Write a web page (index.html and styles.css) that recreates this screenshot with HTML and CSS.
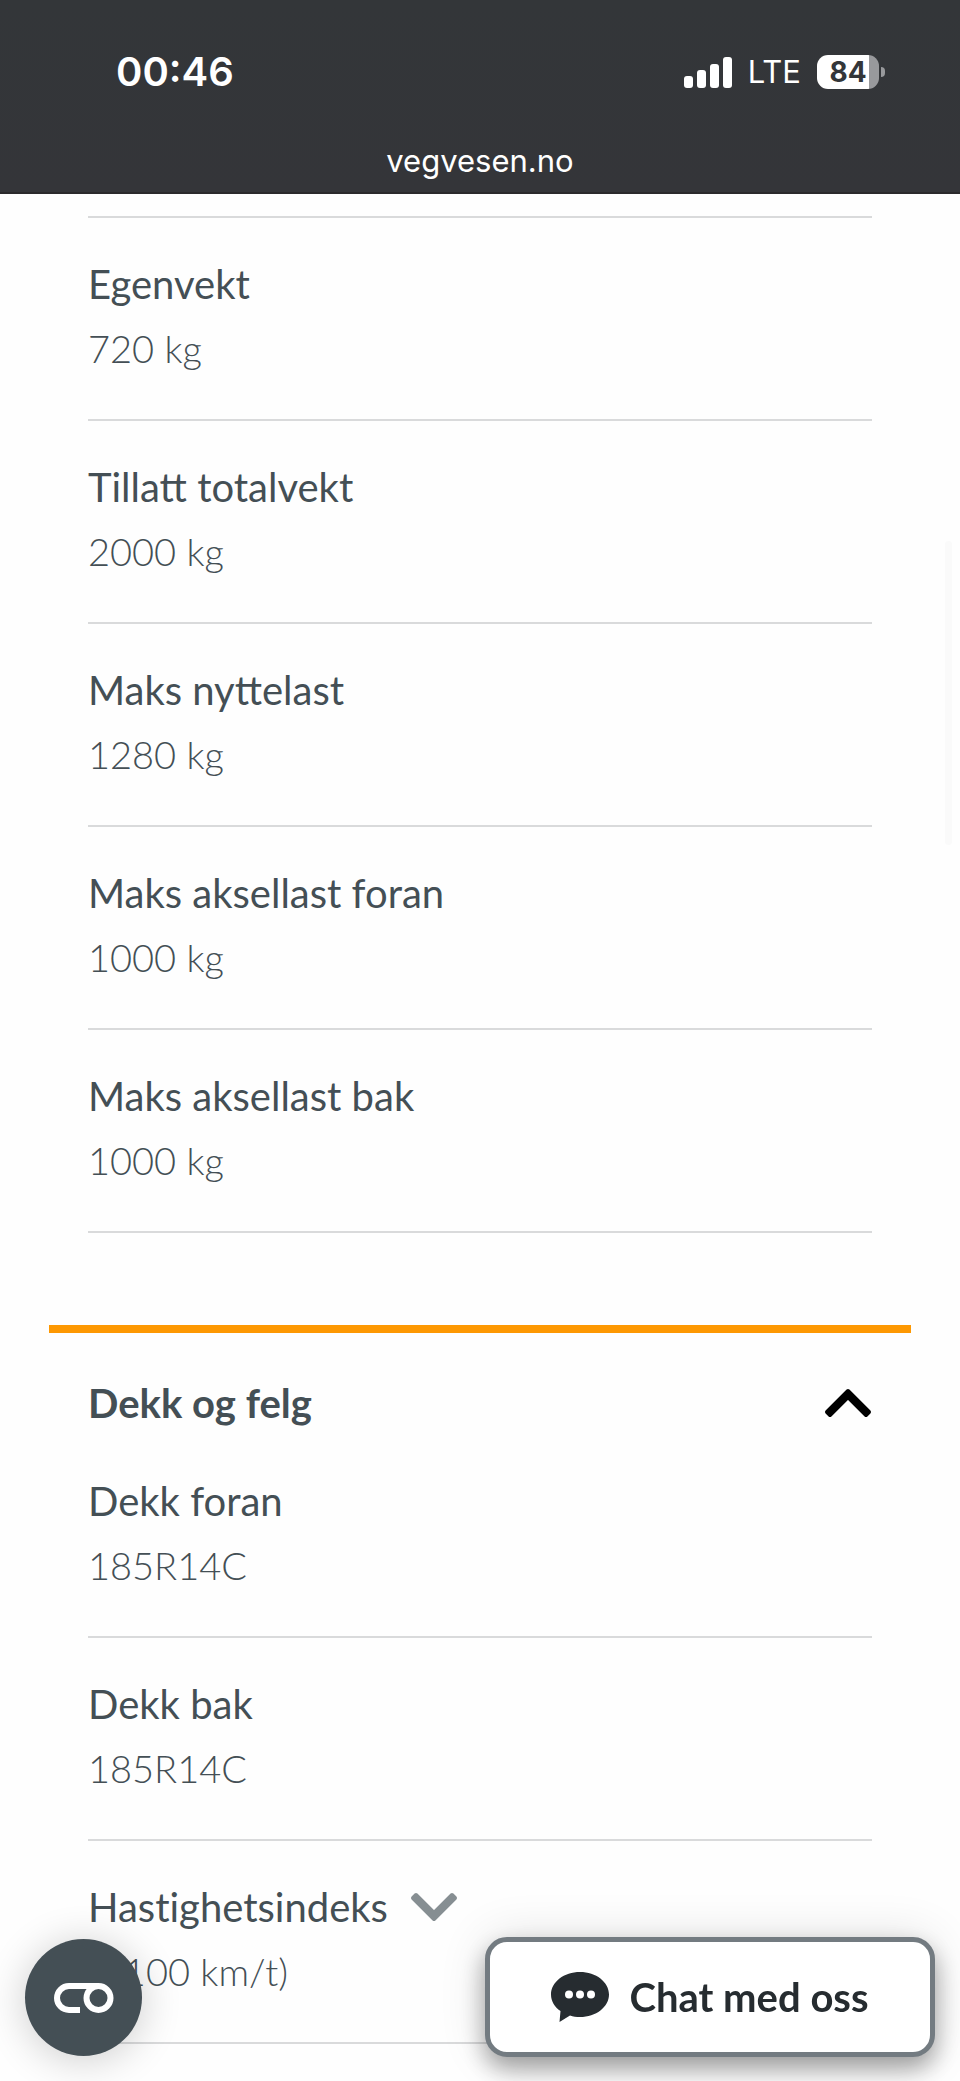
FILE: index.html
```html
<!DOCTYPE html>
<html lang="no">
<head>
    <meta charset="UTF-8">
    <meta name="viewport" content="width=device-width, initial-scale=1">
    <title>vegvesen.no</title>
    <link rel="stylesheet" href="styles.css">
</head>
<body>
    <header class="topbar">
        <div class="status">
            <span class="clock">00:46</span>
            <div class="status-right">
                <svg class="signal" viewBox="0 0 48 31" aria-hidden="true">
                    <rect x="0" y="19" width="9" height="12" rx="3"/>
                    <rect x="13" y="13" width="9" height="18" rx="3"/>
                    <rect x="26" y="7" width="9" height="24" rx="3"/>
                    <rect x="39" y="0" width="9" height="31" rx="3"/>
                </svg>
                <span class="network">LTE</span>
                <div class="battery"><span class="battery-level">84</span></div>
            </div>
        </div>
        <div class="address">vegvesen.no</div>
    </header>

    <main class="content">
        <dl class="list list-first">
            <div class="item"><dt>Egenvekt</dt><dd>720 kg</dd></div>
            <div class="item"><dt>Tillatt totalvekt</dt><dd>2000 kg</dd></div>
            <div class="item"><dt>Maks nyttelast</dt><dd>1280 kg</dd></div>
            <div class="item"><dt>Maks aksellast foran</dt><dd>1000 kg</dd></div>
            <div class="item"><dt>Maks aksellast bak</dt><dd>1000 kg</dd></div>
        </dl>

        <section class="panel">
            <h2 class="panel-heading">
                <button class="panel-toggle" type="button" aria-expanded="true">
                    Dekk og felg
                    <svg class="chevron" viewBox="0 0 48 30" aria-hidden="true">
                        <path d="M24 3L45 24L42 27L24 9L6 27L3 24Z"/>
                    </svg>
                </button>
            </h2>
            <dl class="list">
                <div class="item"><dt>Dekk foran</dt><dd>185R14C</dd></div>
                <div class="item"><dt>Dekk bak</dt><dd>185R14C</dd></div>
                <div class="item">
                    <dt>
                        <button class="help-toggle" type="button" aria-expanded="false">
                            Hastighetsindeks
                            <svg class="chevron" viewBox="0 0 48 30" aria-hidden="true">
                                <path d="M24 27L45 6L42 3L24 21L6 3L3 6Z"/>
                            </svg>
                        </button>
                    </dt>
                    <dd>J (100 km/t)</dd>
                </div>
            </dl>
        </section>
    </main>

    <div class="scroll-thumb"></div>

    <button class="cookie-button" type="button" aria-label="Informasjonskapsler">
        <svg class="cookie-icon" viewBox="0 0 60 30" aria-hidden="true">
            <path d="M26 27H15A12 12 0 0 1 15 3H45"/>
            <circle cx="44.500" cy="15" r="12"/>
        </svg>
    </button>

    <button class="chat-button" type="button">
        <svg class="chat-icon" viewBox="0 0 58 50" aria-hidden="true">
            <path d="M29 0C45 0 58 10 58 22.500S45 45 29 45C25.500 45 22 44.500 19 43.500L8.500 50L9.500 39C3.500 35 0 29 0 22.500C0 10 13 0 29 0Z"/>
            <circle cx="18" cy="22.500" r="4"/>
            <circle cx="29" cy="22.500" r="4"/>
            <circle cx="40" cy="22.500" r="4"/>
        </svg>
        Chat med oss
    </button>
</body>
</html>
```
FILE: styles.css
```css
body {
    margin: 0;
    background: #fefefe;
    color: #444f55;
    font-family: Lato, "Noto Sans", sans-serif;
    font-size: 40px;
    line-height: 64px;
}

button {
    margin: 0;
    padding: 0;
    border: 0;
    background: none;
    color: inherit;
    font: inherit;
    cursor: pointer;
}

/* top bar */
.topbar {
    box-sizing: border-box;
    height: 194px;
    padding: 40px 75px 0 116px;
    border-bottom: 2px solid #2b2a2c;
    background: linear-gradient(#333639, #343539);
    color: #fff;
    font-family: Inter, sans-serif;
}

.status {
    display: flex;
    align-items: center;
    justify-content: space-between;
}

.clock {
    font-size: 40px;
    font-weight: 600;
}

.status-right {
    display: flex;
    align-items: center;
    gap: 16px;
}

.signal {
    width: 48px;
    height: 31px;
    fill: #fff;
}

.network {
    font-size: 31px;
}

.battery {
    position: relative;
    width: 62px;
    height: 34px;
    margin-right: 6px;
    border-radius: 11px;
    background: linear-gradient(90deg, #fff 52px, #98999c 52px);
    color: #333639;
    font-size: 28px;
    font-weight: 700;
    line-height: 34px;
    text-align: center;
}

.battery::after {
    content: "";
    position: absolute;
    top: 12px;
    right: -6px;
    width: 4px;
    height: 10px;
    border-radius: 0 5px 5px 0;
    background: #98999c;
}

.address {
    margin: 25px 41px 0 0;
    font-size: 31px;
    line-height: 64px;
    text-align: center;
}

/* vehicle data */
.content {
    padding: 22px 49px 37px;
}

.list {
    margin: 0 39px;
}

.list-first {
    border-top: 2px solid #d9dadb;
}

.item {
    padding: 34px 0 39px;
    border-bottom: 2px solid #d9dadb;
}

.item dt {
    font-weight: 400;
}

.item dd {
    margin: 0;
    font-size: 38px;
    font-weight: 300;
}

.panel {
    margin-top: 92px;
    padding-top: 38px;
    border-top: 8px solid #fd9802;
}

.panel-heading {
    margin: 0 39px;
    font-size: 40px;
    font-weight: 700;
}

.panel-toggle {
    display: flex;
    align-items: center;
    justify-content: space-between;
    width: 100%;
    color: #444f55;
    text-align: left;
}

.help-toggle {
    display: flex;
    align-items: center;
    gap: 22px;
    font-variant-ligatures: none;
}

.chevron {
    width: 48px;
    height: 30px;
    fill: #868e92;
    stroke: #868e92;
    stroke-width: 4;
    stroke-linejoin: round;
}

.panel-toggle .chevron {
    fill: #000;
    stroke: #000;
}

.scroll-thumb {
    position: fixed;
    top: 541px;
    right: 8px;
    width: 7px;
    height: 304px;
    border-radius: 4px;
    background: #fafafa;
}

/* floating buttons */
.cookie-button {
    position: fixed;
    bottom: 25px;
    left: 25px;
    display: flex;
    align-items: center;
    justify-content: center;
    width: 117px;
    height: 117px;
    border-radius: 50%;
    background: #444f55;
    box-shadow: 0 4px 40px rgba(0, 0, 0, 0.2);
}

.cookie-icon {
    width: 60px;
    height: 30px;
    fill: none;
    stroke: #fff;
    stroke-width: 6;
}

.chat-button {
    position: fixed;
    right: 25px;
    bottom: 24px;
    display: flex;
    align-items: center;
    justify-content: center;
    gap: 20px;
    box-sizing: border-box;
    width: 450px;
    height: 120px;
    border: 5px solid #737b81;
    border-radius: 22px;
    background: #fff;
    box-shadow: 0 12px 24px rgba(0, 0, 0, 0.35), 0 0 48px rgba(0, 0, 0, 0.12);
    color: #262c30;
    font-weight: 700;
}

.chat-icon {
    width: 58px;
    height: 50px;
    fill: #262c30;
}

.chat-icon circle {
    fill: #fff;
}
```
